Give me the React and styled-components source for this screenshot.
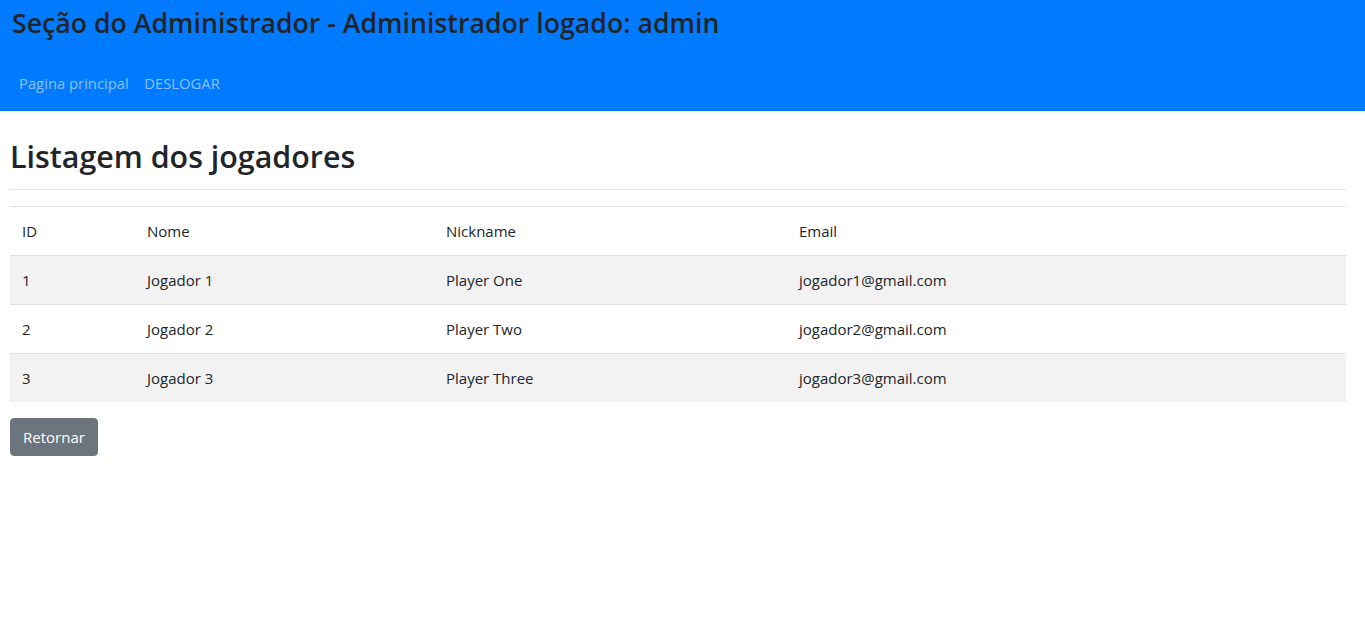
import React from 'react';
import styled, { createGlobalStyle } from 'styled-components';

const GlobalStyle = createGlobalStyle`
  body {
    margin: 0;
    font-family: "Open Sans", "Noto Sans", sans-serif;
    color: #212529;
    background: #ffffff;
  }
`;

const Header = styled.header`
  background-color: #007bff;
  height: 111px;
  box-sizing: border-box;
  padding: 7px 12px 8px;
  display: flex;
  flex-direction: column;
  justify-content: space-between;
`;

const Title = styled.h3`
  margin: 0;
  font-size: 26.7px;
  font-weight: 600;
  line-height: 1.2;
  color: #212529;
`;

const Nav = styled.nav`
  display: flex;
  margin-left: -1px;
`;

const NavLink = styled.a`
  padding: 8px 7.5px 8px 8px;
  font-size: 14.8px;
  line-height: 24px;
  color: rgba(255, 255, 255, 0.55);
  text-decoration: none;
`;

const Content = styled.main`
  padding: 0 19px 0 10px;
`;

const PageTitle = styled.h2`
  margin: 27px 0 0;
  font-size: 30.4px;
  font-weight: 600;
  line-height: 38px;
  color: #212529;
`;

const Divider = styled.hr`
  margin: 13px 0 16px;
  border: 0;
  border-top: 1px solid #e3e3e3;
`;

const Table = styled.table`
  width: 100%;
  border-collapse: collapse;
  margin-bottom: 16px;
  font-size: 15px;
  th, td {
    padding: 12px;
    line-height: 24px;
    text-align: left;
    font-weight: 400;
    border-top: 1px solid #dee2e6;
  }
  tbody tr:nth-of-type(odd) {
    background-color: #f2f2f2;
  }
`;

const Button = styled.button`
  font-family: inherit;
  font-size: 15px;
  line-height: 24px;
  padding: 6px 12px;
  color: #ffffff;
  background-color: #6c757d;
  border: 1px solid #6c757d;
  border-radius: 4px;
  cursor: pointer;
`;

const players = [
  { id: 1, nome: 'Jogador 1', nick: 'Player One', email: 'jogador1@gmail.com' },
  { id: 2, nome: 'Jogador 2', nick: 'Player Two', email: 'jogador2@gmail.com' },
  { id: 3, nome: 'Jogador 3', nick: 'Player Three', email: 'jogador3@gmail.com' },
];

const App = () => (
  <>
    <GlobalStyle />
    <Header>
      <Title>Seção do Administrador - Administrador logado: admin</Title>
      <Nav>
        <NavLink href="#">Pagina principal</NavLink>
        <NavLink href="#">DESLOGAR</NavLink>
      </Nav>
    </Header>
    <Content>
      <PageTitle>Listagem dos jogadores</PageTitle>
      <Divider />
      <Table>
        <colgroup>
          <col style={{ width: 125 }} />
          <col style={{ width: 299 }} />
          <col style={{ width: 353 }} />
          <col />
        </colgroup>
        <thead>
          <tr>
            <th>ID</th>
            <th>Nome</th>
            <th>Nickname</th>
            <th>Email</th>
          </tr>
        </thead>
        <tbody>
          {players.map((p) => (
            <tr key={p.id}>
              <td>{p.id}</td>
              <td>{p.nome}</td>
              <td>{p.nick}</td>
              <td>{p.email}</td>
            </tr>
          ))}
        </tbody>
      </Table>
      <Button>Retornar</Button>
    </Content>
  </>
);

export default App;
